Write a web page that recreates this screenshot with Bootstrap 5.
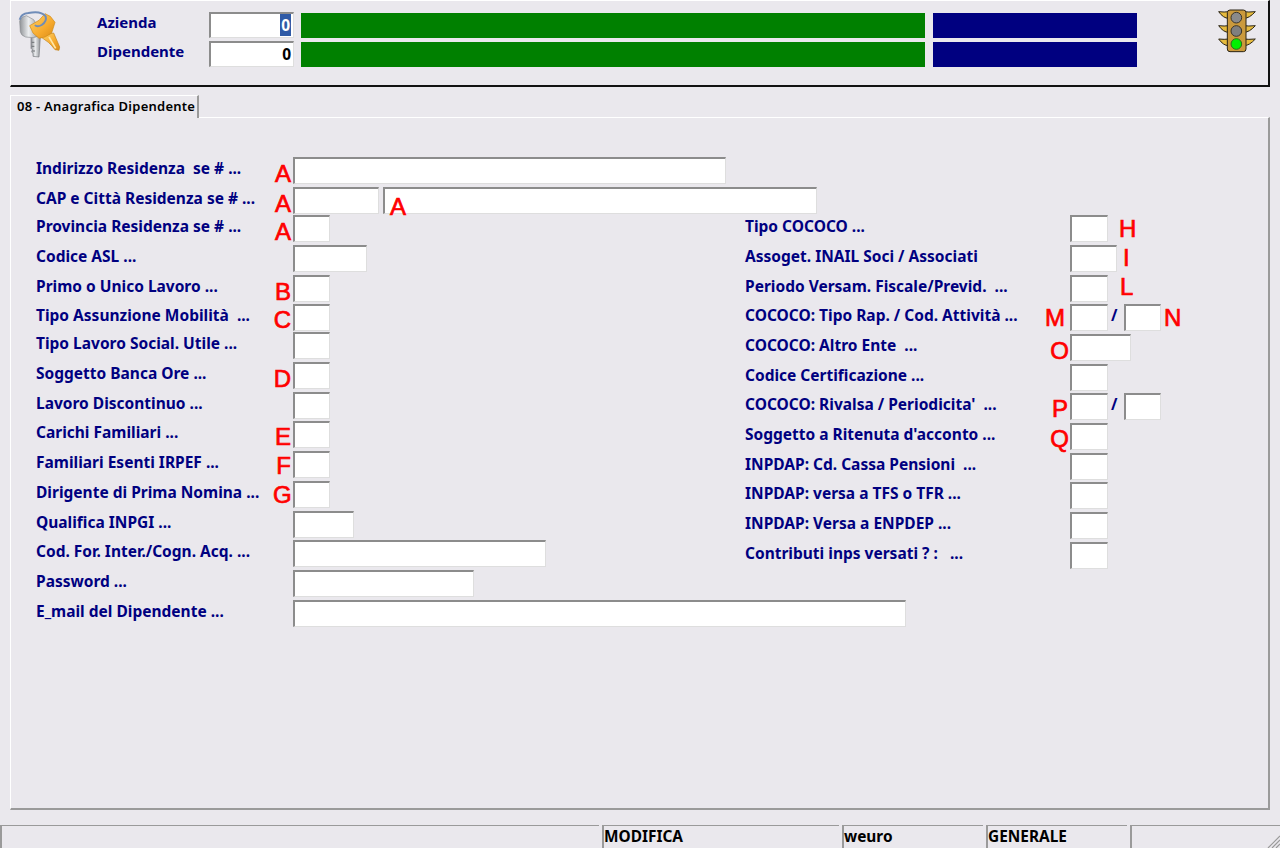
<!DOCTYPE html>
<html lang="it">
<head>
<meta charset="utf-8">
<title>08 - Anagrafica Dipendente</title>
<link href="https://cdn.jsdelivr.net/npm/bootstrap@5.3.0/dist/css/bootstrap.min.css" rel="stylesheet">
<style>
html,body{height:100%;overflow:hidden}
body{background:#eae8ed;font-family:"Noto Sans","DejaVu Sans",sans-serif;font-size:14px;color:#000080}
.shell{height:848px;padding:0 10px}
.toppanel{height:87px;border-top:1px solid #fff;border-left:1px solid #fff;border-right:2px solid #111;border-bottom:2px solid #111}
.keysvg{width:60px;height:60px;margin-top:4px;flex:none}
.lightsvg{width:60px;height:55px;margin:4px 2px 0 auto;flex:none}
.toprows{margin:11px 0 0 26px;gap:3px}
.toprow{height:26px}
.toplbl{width:112px;font-weight:700;font-size:15px;line-height:21px;color:#000080}
.numbox{width:85px;height:26px;background:#fff;border:solid;border-width:2px 1px 1px 2px;border-color:#8c8c8c #dedede #dedede #8c8c8c;text-align:right;padding-right:2px;color:#000;font-weight:700;font-size:15.5px;line-height:23px}
.numsel{background:#2f5aa6;color:#fff;padding:0 1px}
.barg{width:624px;height:25px;margin:1px 0 0 7px;background:#008000}
.barn{width:204px;height:25px;margin:1px 0 0 8px;background:#000080}
.tabstrip{margin-top:8px;border:0;height:23px;position:relative;z-index:1}
.tabstrip .nav-link.tabcur{height:23px;width:189px;padding:0 0 0 6px;background:#eae8ed;border:solid;border-width:1px 2px 0 1px;border-color:#fff #9a9a9a transparent #fff;border-radius:0;color:#000;font-size:13px;font-weight:600;letter-spacing:.25px;line-height:20px;white-space:nowrap}
.mainpanel{height:693px;margin-top:-1px;border:solid;border-width:1px 2px 2px 1px;border-color:#fff #9a9a9a #9a9a9a #fff;padding:39px 0 0 25px}
.frow{display:flex;align-items:flex-start;position:relative}
.r28{height:28px}.r29{height:29px}.r30{height:30px}
.lbl{font-weight:700;font-size:15.5px;line-height:20px;margin-top:1px;white-space:pre;color:#000080}
.lft{width:237px;flex:none}
.rgt{width:325px;flex:none}
.mk{font-family:"Liberation Sans",Arial,sans-serif;font-size:24px;line-height:24px;color:#f00;text-align:right;margin-top:5px;-webkit-text-stroke:.7px #f00}
.mkl{width:20px;flex:none;padding-right:2px}
.mkb{width:25px;flex:none;margin-left:-25px;padding-right:1px}
.mka{margin-left:11px}
.slash{margin:1px 7px 0 3px;width:6px;font-weight:700;font-size:15.5px;line-height:20px}
.form-control.fld{height:27px;min-height:0;padding:0;border:solid;border-width:2px 1px 1px 2px;border-color:#8c8c8c #dedede #dedede #8c8c8c;border-radius:0;background:#fff;flex:none}
.w37{width:37px}.w38{width:38px}.w47{width:47px}.w61{width:61px}.w74{width:74px}.w86{width:86px}.w181{width:181px}.w253{width:253px}.w433{width:433px}.w434{width:434px}.w613{width:613px}
.mr4{margin-right:4px}
.inmk{position:absolute;left:354px;top:3px;margin-top:5px}
.up1{margin-top:4px}.up2{margin-top:3px}.up3{margin-top:2px}.up4{margin-top:1px}.up5{margin-top:0}
.mi{margin-left:6px}.ml{margin-left:12px}.mn{margin-left:3px}
.mm{padding-right:5px}.mp{padding-right:2px}
.colleft{width:709px;flex:none}
.statusbar{height:23px;margin:15px -10px 0;gap:3px;position:relative}
.stcell{border-top:1px solid #9a9a9a;border-left:2px solid #9a9a9a;color:#000;font-weight:700;font-size:15.4px;line-height:22px;flex:none;white-space:nowrap}
.s1{width:599px}.s2{width:237px}.s3{width:141px}.s4{width:141px}.s5{flex:1 1 auto}
.grip{position:absolute;right:0;bottom:0;width:14px;height:14px}
</style>
</head>
<body>
<div class="shell d-flex flex-column">
  <div class="toppanel d-flex">
    <svg class="keysvg" viewBox="0 0 180 180">
      <defs>
        <linearGradient id="sil" x1="0" y1="0" x2="1" y2="0"><stop offset="0" stop-color="#8f9296"/><stop offset=".45" stop-color="#eceef0"/><stop offset="1" stop-color="#8e9195"/></linearGradient>
        <linearGradient id="gol" x1="0" y1="0" x2="1" y2="1"><stop offset="0" stop-color="#ffd36b"/><stop offset=".6" stop-color="#f6a92c"/><stop offset="1" stop-color="#d98a18"/></linearGradient>
      </defs>
      <path d="M60 92 L60 130 L64 134 L62 140 L66 146 L66 154 L84 156 L88 96Z" fill="url(#sil)" stroke="#777a7e" stroke-width="2"/>
      <path d="M62 112h8M62 124h8M64 138h8" stroke="#6e7175" stroke-width="3"/>
      <path d="M26 48 Q30 34 46 32 L68 44 L84 70 L86 92 Q68 102 44 96 Q30 92 28 80Z" fill="url(#sil)" stroke="#8a8d91" stroke-width="2"/>
      <path d="M90 96 L110 88 L128 84 L146 126 L144 136 L132 134 L122 122 L112 112Z" fill="url(#gol)" stroke="#c2841a" stroke-width="2"/>
      <path d="M114 96 L134 130" stroke="#ffe7a8" stroke-width="5"/>
      <path d="M56 62 L84 46 L102 26 L118 34 L132 52 L122 84 L102 96 L84 100 L66 84Z" fill="url(#gol)" stroke="#cf8a16" stroke-width="2"/>
      <path d="M26 44 Q30 26 52 24 Q90 16 104 34 Q108 50 92 60 Q78 68 72 60" fill="none" stroke="#6f8cb8" stroke-width="6"/>
    </svg>
    <div class="toprows d-flex flex-column">
      <div class="toprow d-flex">
        <span class="toplbl">Azienda</span>
        <div class="numbox"><span class="numsel">0</span></div>
        <div class="barg"></div><div class="barn"></div>
      </div>
      <div class="toprow d-flex">
        <span class="toplbl">Dipendente</span>
        <div class="numbox">0</div>
        <div class="barg"></div><div class="barn"></div>
      </div>
    </div>
    <svg class="lightsvg" viewBox="0 0 180 165">
      <g stroke="#2a2416" stroke-width="3" stroke-linejoin="round">
        <path d="M38 20 Q56 22 68 20 L68 40 Q52 40 38 20Z" fill="#e6bb3e"/>
        <path d="M148 20 Q126 22 114 20 L114 40 Q130 40 148 20Z" fill="#e6bb3e"/>
        <path d="M38 62 Q56 64 68 62 L68 82 Q52 82 38 62Z" fill="#e6bb3e"/>
        <path d="M148 62 Q126 64 114 62 L114 82 Q130 82 148 62Z" fill="#e6bb3e"/>
        <path d="M38 102 Q56 104 68 102 L68 122 Q52 122 38 102Z" fill="#e6bb3e"/>
        <path d="M148 102 Q126 104 114 102 L114 122 Q130 122 148 102Z" fill="#e6bb3e"/>
        <rect x="64" y="15" width="56" height="125" rx="8" fill="#cb9a3c"/>
      </g>
      <circle cx="91" cy="38" r="16" fill="#8a8a8a" stroke="#3a352a" stroke-width="3"/>
      <circle cx="91" cy="78" r="16" fill="#7f7f7f" stroke="#3a352a" stroke-width="3"/>
      <circle cx="91" cy="117" r="16" fill="#00f000" stroke="#2f6a1e" stroke-width="3"/>
    </svg>
  </div>

  <ul class="nav nav-tabs tabstrip">
    <li class="nav-item"><a class="nav-link active tabcur" href="#">08 - Anagrafica Dipendente</a></li>
  </ul>

  <div class="mainpanel">
    <div class="frow r30"><span class="lbl lft">Indirizzo Residenza  se # ...</span><span class="mk mkl">A</span><input class="form-control fld w433"></div>
    <div class="frow r28"><span class="lbl lft">CAP e Città Residenza se # ...</span><span class="mk mkl">A</span><input class="form-control fld w86 mr4"><input class="form-control fld w434"><span class="mk inmk">A</span></div>
    <div class="d-flex">
      <div class="colleft">
        <div class="frow r30"><span class="lbl lft">Provincia Residenza se # ...</span><span class="mk mkl">A</span><input class="form-control fld w37"></div>
        <div class="frow r30"><span class="lbl lft">Codice ASL ...</span><span class="mkl"></span><input class="form-control fld w74"></div>
        <div class="frow r29"><span class="lbl lft">Primo o Unico Lavoro ...</span><span class="mk mkl">B</span><input class="form-control fld w37"></div>
        <div class="frow r28"><span class="lbl lft">Tipo Assunzione Mobilità  ...</span><span class="mk mkl up1">C</span><input class="form-control fld w37"></div>
        <div class="frow r30"><span class="lbl lft">Tipo Lavoro Social. Utile ...</span><span class="mkl"></span><input class="form-control fld w37"></div>
        <div class="frow r30"><span class="lbl lft">Soggetto Banca Ore ...</span><span class="mk mkl">D</span><input class="form-control fld w37"></div>
        <div class="frow r29"><span class="lbl lft">Lavoro Discontinuo ...</span><span class="mkl"></span><input class="form-control fld w37"></div>
        <div class="frow r30"><span class="lbl lft">Carichi Familiari ...</span><span class="mk mkl up1">E</span><input class="form-control fld w37"></div>
        <div class="frow r30"><span class="lbl lft">Familiari Esenti IRPEF ...</span><span class="mk mkl up2">F</span><input class="form-control fld w37"></div>
        <div class="frow r30"><span class="lbl lft">Dirigente di Prima Nomina ...</span><span class="mk mkl up3">G</span><input class="form-control fld w37"></div>
        <div class="frow r29"><span class="lbl lft">Qualifica INPGI ...</span><span class="mkl"></span><input class="form-control fld w61"></div>
        <div class="frow r30"><span class="lbl lft">Cod. For. Inter./Cogn. Acq. ...</span><span class="mkl"></span><input class="form-control fld w253"></div>
        <div class="frow r30"><span class="lbl lft">Password ...</span><span class="mkl"></span><input class="form-control fld w181"></div>
      </div>
      <div>
        <div class="frow r30"><span class="lbl rgt">Tipo COCOCO ...</span><input class="form-control fld w38"><span class="mk mka up3">H</span></div>
        <div class="frow r30"><span class="lbl rgt">Assoget. INAIL Soci / Associati</span><input class="form-control fld w47"><span class="mk mi up4">I</span></div>
        <div class="frow r29"><span class="lbl rgt">Periodo Versam. Fiscale/Previd.  ...</span><input class="form-control fld w38"><span class="mk ml up5">L</span></div>
        <div class="frow r30"><span class="lbl rgt">COCOCO: Tipo Rap. / Cod. Attività ...</span><span class="mk mkb mm up3">M</span><input class="form-control fld w38"><span class="slash">/</span><input class="form-control fld w37"><span class="mk mn up3">N</span></div>
        <div class="frow r30"><span class="lbl rgt">COCOCO: Altro Ente  ...</span><span class="mk mkb">O</span><input class="form-control fld w61"></div>
        <div class="frow r29"><span class="lbl rgt">Codice Certificazione ...</span><input class="form-control fld w38"></div>
        <div class="frow r30"><span class="lbl rgt">COCOCO: Rivalsa / Periodicita'  ...</span><span class="mk mkb mp up1">P</span><input class="form-control fld w38"><span class="slash">/</span><input class="form-control fld w37"></div>
        <div class="frow r30"><span class="lbl rgt">Soggetto a Ritenuta d'acconto ...</span><span class="mk mkb up1">Q</span><input class="form-control fld w38"></div>
        <div class="frow r29"><span class="lbl rgt">INPDAP: Cd. Cassa Pensioni  ...</span><input class="form-control fld w38"></div>
        <div class="frow r30"><span class="lbl rgt">INPDAP: versa a TFS o TFR ...</span><input class="form-control fld w38"></div>
        <div class="frow r30"><span class="lbl rgt">INPDAP: Versa a ENPDEP ...</span><input class="form-control fld w38"></div>
        <div class="frow r29"><span class="lbl rgt">Contributi inps versati ? :   ...</span><input class="form-control fld w38"></div>
      </div>
    </div>
    <div class="frow r30"><span class="lbl lft">E_mail del Dipendente ...</span><span class="mkl"></span><input class="form-control fld w613"></div>
  </div>

  <div class="statusbar d-flex">
    <div class="stcell s1"></div>
    <div class="stcell s2">MODIFICA</div>
    <div class="stcell s3">weuro</div>
    <div class="stcell s4">GENERALE</div>
    <div class="stcell s5"></div>
    <svg class="grip" viewBox="0 0 14 14"><path d="M2 14 14 2M6 14 14 6M10 14 14 10" stroke="#9a9a9a" stroke-width="1.2"/></svg>
  </div>
</div>
<script src="https://cdn.jsdelivr.net/npm/bootstrap@5.3.0/dist/js/bootstrap.bundle.min.js"></script>
</body>
</html>
